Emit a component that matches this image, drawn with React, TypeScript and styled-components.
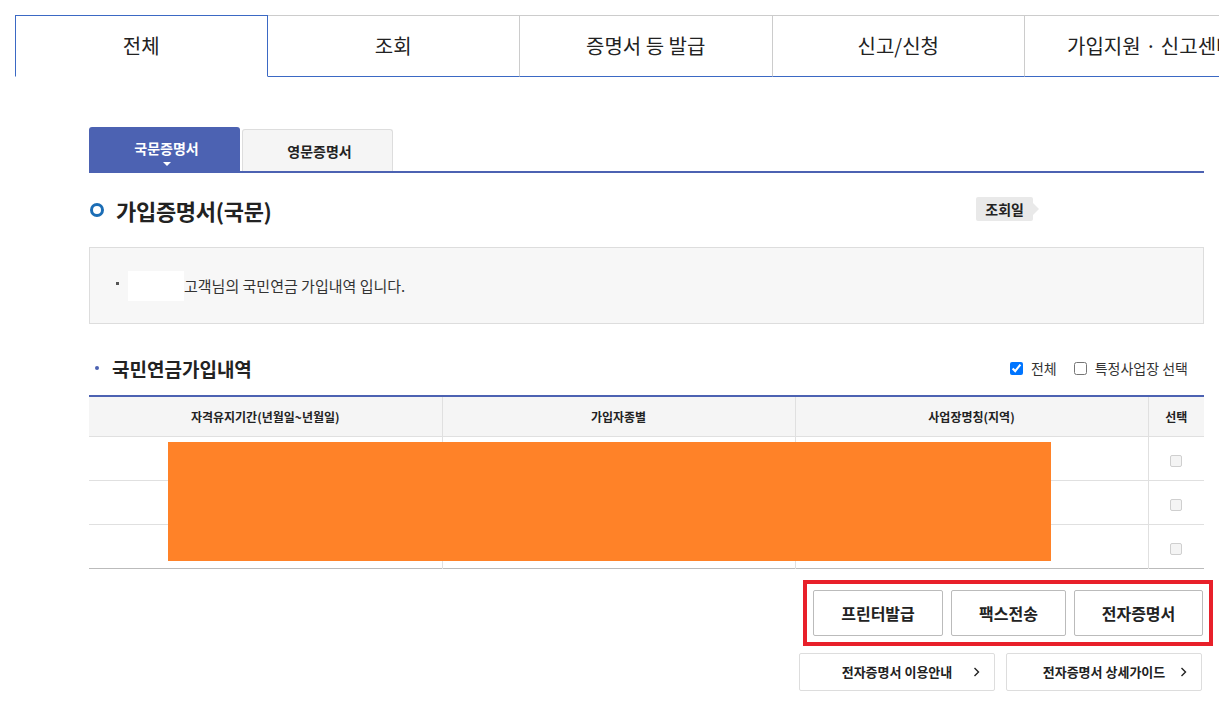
import styled, { createGlobalStyle } from "styled-components";

const GlobalStyle = createGlobalStyle`
    html, body {
        margin: 0;
        padding: 0;
        background: #fff;
        overflow: hidden;
    }
    body {
        font-family: "Noto Sans CJK KR", "Noto Sans", sans-serif;
        color: #222;
    }
    * { box-sizing: border-box; }
`;

const BLUE = '#3b69c4';
const NAVY = '#4c62b2';

const Page = styled.div`
    width: 1219px;
    height: 701px;
    overflow: hidden;
`;
const TopTabs = styled.ul`
    list-style: none;
    margin: 0;
    padding: 15px 0 0 15px;
    display: flex;
    width: 1300px;
`;
const TopTab = styled.li<{ $active?: boolean }>`
    flex: 0 0 252.5px;
    height: 62px;
    display: flex;
    align-items: center;
    justify-content: center;
    font-size: 20px;
    color: #222;
    white-space: nowrap;
    border-top: 1px solid ${p => p.$active ? BLUE : '#cccccc'};
    border-right: 1px solid ${p => p.$active ? BLUE : '#cccccc'};
    border-left: ${p => p.$active ? `1px solid ${BLUE}` : 'none'};
    border-bottom: ${p => p.$active ? '1px solid transparent' : `1px solid ${BLUE}`};
    padding-bottom: 1px;
`;
const Content = styled.div`
    width: 1115px;
    margin: 50px 0 0 89px;
`;
const SubTabs = styled.div`
    display: flex;
    align-items: flex-end;
    gap: 2px;
    border-bottom: 2px solid ${NAVY};
`;
const SubTab = styled.div<{ $active?: boolean }>`
    position: relative;
    width: 151px;
    height: ${p => p.$active ? '44px' : '42px'};
    display: flex;
    align-items: center;
    justify-content: center;
    padding-left: 4px;
    font-size: 14px;
    font-weight: 700;
    color: ${p => p.$active ? '#fff' : '#222'};
    background: ${p => p.$active ? NAVY : '#f5f5f5'};
    border: ${p => p.$active ? 'none' : '1px solid #dddddd'};
    border-bottom: none;
    border-radius: 3px 3px 0 0;
    padding-bottom: ${p => p.$active ? '3px' : '0'};
`;
const Caret = styled.span`
    position: absolute;
    left: 50%;
    bottom: 5px;
    margin-left: -2px;
    width: 0;
    height: 0;
    border-left: 4px solid transparent;
    border-right: 4px solid transparent;
    border-top: 4px solid #fff;
`;
const TitleRow = styled.div`
    display: flex;
    align-items: center;
    justify-content: space-between;
    margin-top: 19px;
    height: 36px;
`;
const Title = styled.h2`
    margin: 0;
    display: flex;
    align-items: center;
    gap: 12px;
    font-size: 22px;
    font-weight: 700;
    color: #222;
    letter-spacing: -0.3px;
`;
const Ring = styled.span`
    width: 14px;
    height: 14px;
    border-radius: 50%;
    border: 3px solid #1b6db5;
    margin-left: 1px;
`;
const DateTag = styled.span`
    position: relative;
    margin-right: 171px;
    margin-top: -2px;
    padding: 0 9px;
    height: 24px;
    display: flex;
    align-items: center;
    background: #e9e9e9;
    border-radius: 2px;
    font-size: 14px;
    font-weight: 700;
    color: #222;
    &::after {
        content: '';
        position: absolute;
        right: -6px;
        top: 50%;
        margin-top: -6px;
        border-top: 6px solid transparent;
        border-bottom: 6px solid transparent;
        border-left: 6px solid #e9e9e9;
    }
`;
const InfoBox = styled.div`
    margin-top: 19px;
    height: 77px;
    background: #f7f7f7;
    border: 1px solid #dddddd;
    display: flex;
    align-items: center;
    padding-left: 26px;
    font-size: 15px;
    color: #333;
`;
const Square = styled.span`
    width: 3px;
    height: 3px;
    background: #555;
    margin-right: 9px;
    margin-top: -4px;
`;
const Masked = styled.span`
    display: inline-block;
    width: 56px;
    height: 30px;
    background: #fff;
`;
const SectionRow = styled.div`
    display: flex;
    align-items: center;
    justify-content: space-between;
    margin-top: 30px;
    height: 28px;
`;
const SectionTitle = styled.h3`
    margin: 0;
    display: flex;
    align-items: center;
    font-size: 19px;
    font-weight: 700;
    color: #222;
    padding-left: 6px;
    &::before {
        content: '';
        width: 4px;
        height: 4px;
        border-radius: 50%;
        background: ${NAVY};
        margin-right: 13px;
    }
`;
const Checks = styled.div`
    display: flex;
    align-items: center;
    gap: 17px;
    padding-right: 16px;
    font-size: 14px;
    color: #333;
`;
const CheckLabel = styled.label`
    display: flex;
    align-items: center;
    gap: 8px;
    input {
        margin: 0;
        width: 13px;
        height: 13px;
    }
`;
const TableWrap = styled.div`
    position: relative;
    margin-top: 13px;
`;
const Table = styled.table`
    width: 100%;
    border-collapse: collapse;
    border-top: 2px solid ${NAVY};
    border-bottom: 1px solid #bbbbbb;
    table-layout: fixed;
    th {
        height: 40px;
        background: #f5f5f5;
        font-size: 12px;
        font-weight: 700;
        color: #222;
        border-bottom: 1px solid #e0e0e0;
    }
    td {
        height: 44px;
        border-bottom: 1px solid #e0e0e0;
        text-align: center;
    }
    th + th, td + td {
        border-left: 1px solid #e0e0e0;
    }
    tr:last-child td { border-bottom: none; }
`;
const BoxCheck = styled.span`
    display: inline-block;
    width: 12px;
    height: 12px;
    border: 1px solid #cfcfcf;
    border-radius: 2px;
    background: #f4f4f4;
    vertical-align: middle;
`;
const Redaction = styled.div`
    position: absolute;
    left: 79px;
    top: 47px;
    width: 883px;
    height: 119px;
    background: #ff8228;
`;
const Actions = styled.div`
    display: flex;
    flex-direction: column;
    align-items: flex-end;
    margin-top: 11px;
`;
const Highlight = styled.div`
    display: flex;
    gap: 8px;
    padding: 6px;
    border: 4px solid #e8202a;
    margin-right: -9px;
`;
const ActionButton = styled.button<{ $w: number }>`
    width: ${p => p.$w}px;
    height: 46px;
    background: #fff;
    border: 1px solid #bbbbbb;
    border-radius: 2px;
    font-family: inherit;
    font-size: 16px;
    font-weight: 700;
    color: #222;
    cursor: pointer;
`;
const Links = styled.div`
    display: flex;
    gap: 11px;
    margin-top: 7px;
    margin-right: 2px;
`;
const LinkButton = styled.a`
    width: 196px;
    height: 38px;
    display: grid;
    grid-template-columns: 1fr auto 1fr;
    align-items: center;
    padding-right: 14px;
    padding-left: 14px;
    border: 1px solid #dddddd;
    border-radius: 2px;
    font-size: 13px;
    font-weight: 700;
    color: #222;
    text-decoration: none;
    white-space: nowrap;
    svg { justify-self: end; grid-column: 3; }
    span { grid-column: 2; }
`;

const Chevron = () => (
    <svg width="7" height="10" viewBox="0 0 7 10" fill="none">
        <path d="M1.5 1 L5.5 5 L1.5 9" stroke="#222" strokeWidth="1.4" />
    </svg>
);

const topTabs = ['전체', '조회', '증명서 등 발급', '신고/신청', '가입지원 · 신고센터'];

export default function App() {
    const rows = [0, 1, 2];
    return (
        <Page>
            <GlobalStyle />
            <TopTabs>
                {topTabs.map((t, i) => (
                    <TopTab key={t} $active={i === 0}>{t}</TopTab>
                ))}
            </TopTabs>
            <Content>
                <SubTabs>
                    <SubTab $active>국문증명서<Caret /></SubTab>
                    <SubTab>영문증명서</SubTab>
                </SubTabs>
                <TitleRow>
                    <Title><Ring />가입증명서(국문)</Title>
                    <DateTag>조회일</DateTag>
                </TitleRow>
                <InfoBox>
                    <Square />
                    <Masked />
                    고객님의 국민연금 가입내역 입니다.
                </InfoBox>
                <SectionRow>
                    <SectionTitle>국민연금가입내역</SectionTitle>
                    <Checks>
                        <CheckLabel><input type="checkbox" defaultChecked />전체</CheckLabel>
                        <CheckLabel><input type="checkbox" />특정사업장 선택</CheckLabel>
                    </Checks>
                </SectionRow>
                <TableWrap>
                    <Table>
                        <colgroup>
                            <col style={{ width: 353 }} />
                            <col style={{ width: 353 }} />
                            <col style={{ width: 353 }} />
                            <col />
                        </colgroup>
                        <thead>
                            <tr>
                                <th>자격유지기간(년월일~년월일)</th>
                                <th>가입자종별</th>
                                <th>사업장명칭(지역)</th>
                                <th>선택</th>
                            </tr>
                        </thead>
                        <tbody>
                            {rows.map(r => (
                                <tr key={r}>
                                    <td></td>
                                    <td></td>
                                    <td></td>
                                    <td><BoxCheck /></td>
                                </tr>
                            ))}
                        </tbody>
                    </Table>
                    <Redaction />
                </TableWrap>
                <Actions>
                    <Highlight>
                        <ActionButton $w={130}>프린터발급</ActionButton>
                        <ActionButton $w={115}>팩스전송</ActionButton>
                        <ActionButton $w={129}>전자증명서</ActionButton>
                    </Highlight>
                    <Links>
                        <LinkButton href="#"><span>전자증명서 이용안내</span><Chevron /></LinkButton>
                        <LinkButton href="#"><span>전자증명서 상세가이드</span><Chevron /></LinkButton>
                    </Links>
                </Actions>
            </Content>
        </Page>
    );
}
